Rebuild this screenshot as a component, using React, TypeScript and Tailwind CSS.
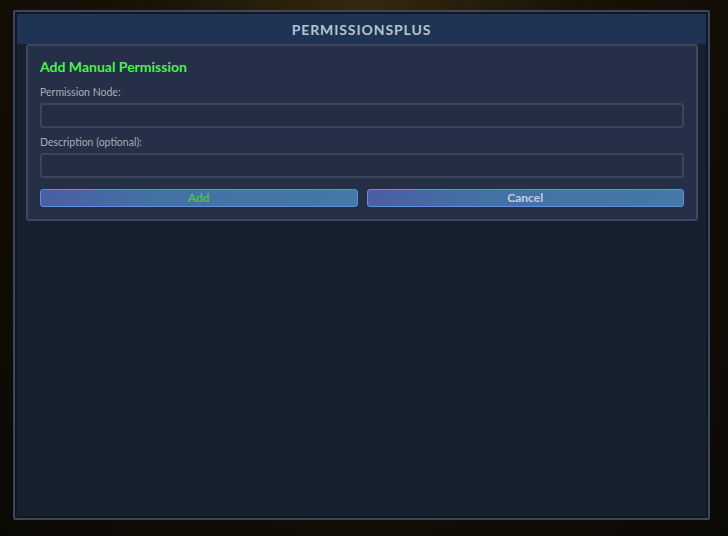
import React, { useState } from 'react';

const App: React.FC = () => {
    const [node, setNode] = useState('');
    const [desc, setDesc] = useState('');

    return (
        <div
            className="w-[728px] h-[536px] flex pl-[13px] pr-[18px] pt-[10px] pb-[16px] bg-[radial-gradient(ellipse_at_top,#34280f_0%,#171207_45%,#0b0905_100%)]"
            style={{ fontFamily: 'Lato, "Open Sans", sans-serif' }}
        >
            {/* Window frame */}
            <div className="flex-1 flex flex-col border-2 border-[#3b4662] rounded-[2px] bg-[#121822]">
                <div className="flex-1 flex flex-col m-[2px] bg-[#17202e]">
                    {/* Header */}
                    <div className="h-[30px] shrink-0 flex items-center justify-center bg-[#1f3352]">
                        <h1 className="text-[14px] font-bold tracking-[0.9px] text-[#b3c5d3]">PERMISSIONSPLUS</h1>
                    </div>

                    {/* Body */}
                    <div className="flex-1 pl-[9px] pr-[8px]">
                        <div className="border-2 border-[#3d4760] rounded-[3px] bg-[#252f48] px-[12px] pt-[12px] pb-[12px]">
                            <h2 className="text-[14px] font-bold text-[#4cf04c] leading-[18px]">Add Manual Permission</h2>

                            <label className="block mt-[9px] text-[10.5px] text-[#a9adb6] leading-[14px]">Permission Node:</label>
                            <input
                                type="text"
                                value={node}
                                onChange={(e) => setNode(e.target.value)}
                                className="block w-full h-[25px] mt-[4px] bg-[#232c43] border-2 border-[#3b4559] rounded-[3px] text-[11px] text-white px-2 outline-none"
                            />

                            <label className="block mt-[7px] text-[10.5px] text-[#a9adb6] leading-[14px]">Description (optional):</label>
                            <input
                                type="text"
                                value={desc}
                                onChange={(e) => setDesc(e.target.value)}
                                className="block w-full h-[25px] mt-[4px] bg-[#232c43] border-2 border-[#3b4559] rounded-[3px] text-[11px] text-white px-2 outline-none"
                            />

                            <div className="flex gap-[9px] mt-[11px]">
                                <button className="flex-1 h-[18px] rounded-[3px] border border-[#5f8fd6] bg-[linear-gradient(90deg,#4b5ea6_0%,#4470a6_35%,#4479aa_100%)] text-[12px] font-bold leading-none text-[#4cc24c]">
                                    Add
                                </button>
                                <button className="flex-1 h-[18px] rounded-[3px] border border-[#5f8fd6] bg-[linear-gradient(90deg,#4b5ea6_0%,#4470a6_35%,#4479aa_100%)] text-[12px] font-bold leading-none text-[#c6ced9]">
                                    Cancel
                                </button>
                            </div>
                        </div>
                    </div>
                </div>
            </div>
        </div>
    );
};

export default App;
